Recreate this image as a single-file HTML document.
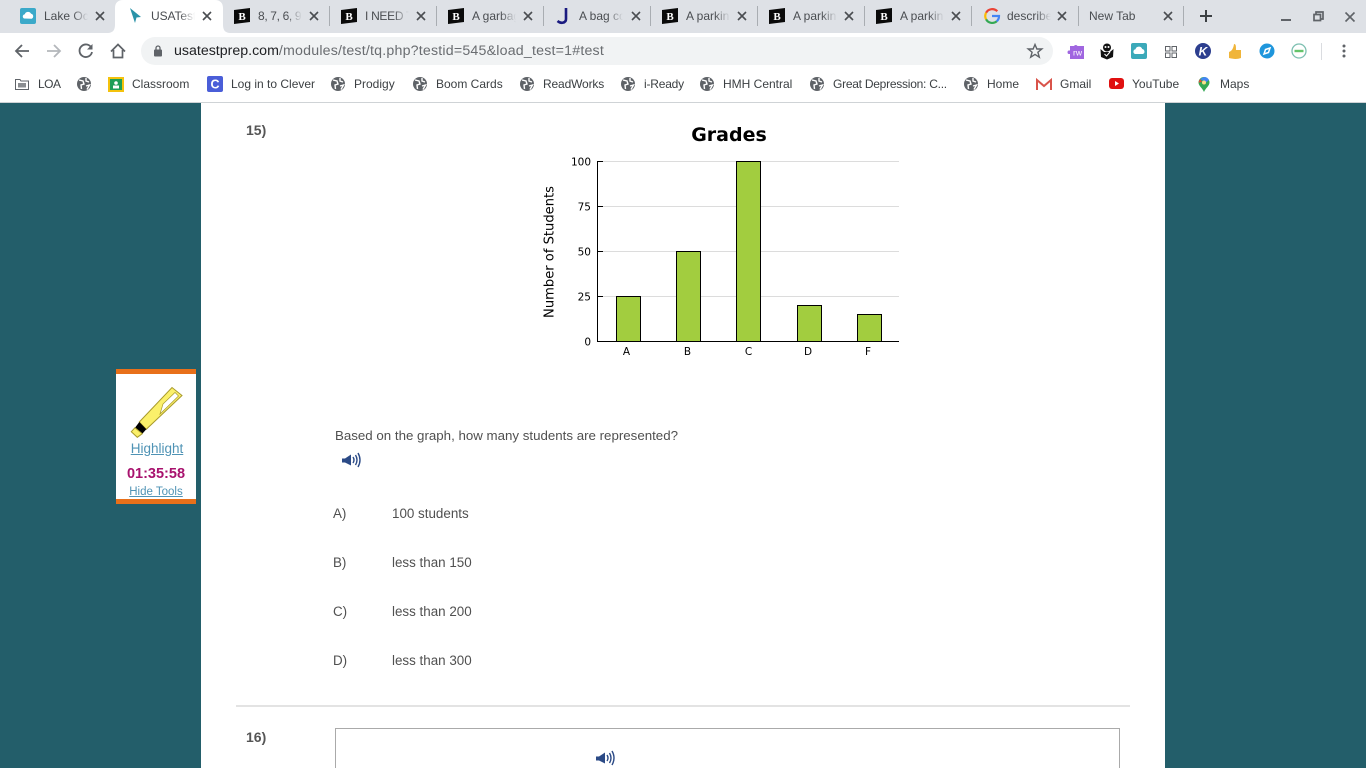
<!DOCTYPE html>
<html><head><meta charset="utf-8"><title>USATestprep</title>
<style>
html,body{margin:0;padding:0;width:1366px;height:768px;overflow:hidden;background:#235e6a;font-family:"Liberation Sans",sans-serif}
#root{position:absolute;left:0;top:0;width:1366px;height:768px;overflow:hidden;background:#235e6a}
.a{position:absolute;white-space:nowrap}
#strip{left:0;top:0;width:1366px;height:33px;background:#dee1e6}
#tool{left:0;top:33px;width:1366px;height:69px;background:#fff}
#line{left:0;top:102px;width:1366px;height:1px;background:#cfd3d6}
.t{top:9px;height:15px;line-height:15px;font-size:12px;color:#4a4d51;overflow:hidden;-webkit-mask-image:linear-gradient(90deg,#000 65%,transparent 100%);mask-image:linear-gradient(90deg,#000 65%,transparent 100%)}
.s{top:6px;width:1px;height:20px;background:#a9adb2}
.b{top:76px;line-height:16px;font-size:12px;color:#3c4043}
.c{color:#505050;font-size:13.4px;line-height:18px}
svg{position:absolute;overflow:visible}
</style></head><body><div id="root">
<div class="a" id="strip"></div>
<div class="a" id="tool"></div>
<div class="a" id="line"></div>

<!-- active tab -->
<svg style="left:107px;top:0" width="124" height="34"><path d="M0 33 C7 33 8 29 8 24 V8 C8 3 11 0 16 0 H108 C113 0 116 3 116 8 V24 C116 29 117 33 124 33 Z" fill="#fff"/></svg>

<!-- favicons -->
<svg style="left:20px;top:8px" width="16" height="16"><rect width="16" height="16" rx="2" fill="#3ba9c9"/><path d="M4 10.5a2.3 2.3 0 0 1 .8-4.3 3.4 3.4 0 0 1 6.3-.4 2.6 2.6 0 0 1 .6 4.9z" fill="#fff"/></svg>
<svg style="left:129px;top:8px" width="13" height="17"><path d="M1 0 L12 9 L7.5 9.5 L6 15 Z" fill="#2a93a8"/></svg>
<svg style="left:234px;top:8px" width="16" height="16"><path d="M0 2 L16 0 V14 L0 16 Z" fill="#0a0a0a"/><text x="8" y="12" text-anchor="middle" font-family="Liberation Serif" font-weight="bold" font-size="11" fill="#fff">B</text></svg>
<svg style="left:341px;top:8px" width="16" height="16"><path d="M0 2 L16 0 V14 L0 16 Z" fill="#0a0a0a"/><text x="8" y="12" text-anchor="middle" font-family="Liberation Serif" font-weight="bold" font-size="11" fill="#fff">B</text></svg>
<svg style="left:448px;top:8px" width="16" height="16"><path d="M0 2 L16 0 V14 L0 16 Z" fill="#0a0a0a"/><text x="8" y="12" text-anchor="middle" font-family="Liberation Serif" font-weight="bold" font-size="11" fill="#fff">B</text></svg>
<svg style="left:556px;top:7px" width="14" height="18"><path d="M10 1 V12 C10 16 5 17 1.5 14" fill="none" stroke="#1a1a80" stroke-width="2.6"/></svg>
<svg style="left:662px;top:8px" width="16" height="16"><path d="M0 2 L16 0 V14 L0 16 Z" fill="#0a0a0a"/><text x="8" y="12" text-anchor="middle" font-family="Liberation Serif" font-weight="bold" font-size="11" fill="#fff">B</text></svg>
<svg style="left:769px;top:8px" width="16" height="16"><path d="M0 2 L16 0 V14 L0 16 Z" fill="#0a0a0a"/><text x="8" y="12" text-anchor="middle" font-family="Liberation Serif" font-weight="bold" font-size="11" fill="#fff">B</text></svg>
<svg style="left:876px;top:8px" width="16" height="16"><path d="M0 2 L16 0 V14 L0 16 Z" fill="#0a0a0a"/><text x="8" y="12" text-anchor="middle" font-family="Liberation Serif" font-weight="bold" font-size="11" fill="#fff">B</text></svg>
<svg style="left:984px;top:8px" width="16" height="16" viewBox="0 0 16 16" fill="none" stroke-width="2.2"><path d="M13.3 3.3A7 7 0 0 0 2.1 4.7" stroke="#ea4335"/><path d="M2.1 4.7a7 7 0 0 0 0 6.6" stroke="#fbbc05"/><path d="M2.1 11.3a7 7 0 0 0 10.6 2" stroke="#34a853"/><path d="M12.7 13.3A7 7 0 0 0 15 8H8" stroke="#4285f4"/></svg>

<!-- titles -->
<div class="a t" style="left:44px;width:44px">Lake Ocean</div>
<div class="a t" style="left:151px;width:44px;letter-spacing:-.1px">USATestprep</div>
<div class="a t" style="left:258px;width:44px;letter-spacing:-.35px">8, 7, 6, 9, 5</div>
<div class="a t" style="left:365px;width:44px;letter-spacing:-.3px">I NEED THE</div>
<div class="a t" style="left:472px;width:44px">A garbage</div>
<div class="a t" style="left:579px;width:44px">A bag contains</div>
<div class="a t" style="left:686px;width:44px">A parking lot</div>
<div class="a t" style="left:793px;width:44px">A parking lot</div>
<div class="a t" style="left:900px;width:44px">A parking lot</div>
<div class="a t" style="left:1007px;width:44px">describe the</div>
<div class="a" style="left:1089px;top:9px;font-size:12px;line-height:15px;color:#4a4d51">New Tab</div>

<!-- close buttons -->
<svg style="left:95px;top:11px" width="10" height="10"><path d="M1 1L9 9M9 1L1 9" stroke="#4a4d51" stroke-width="1.6"/></svg>
<svg style="left:202px;top:11px" width="10" height="10"><path d="M1 1L9 9M9 1L1 9" stroke="#4a4d51" stroke-width="1.6"/></svg>
<svg style="left:309px;top:11px" width="10" height="10"><path d="M1 1L9 9M9 1L1 9" stroke="#4a4d51" stroke-width="1.6"/></svg>
<svg style="left:416px;top:11px" width="10" height="10"><path d="M1 1L9 9M9 1L1 9" stroke="#4a4d51" stroke-width="1.6"/></svg>
<svg style="left:523px;top:11px" width="10" height="10"><path d="M1 1L9 9M9 1L1 9" stroke="#4a4d51" stroke-width="1.6"/></svg>
<svg style="left:631px;top:11px" width="10" height="10"><path d="M1 1L9 9M9 1L1 9" stroke="#4a4d51" stroke-width="1.6"/></svg>
<svg style="left:737px;top:11px" width="10" height="10"><path d="M1 1L9 9M9 1L1 9" stroke="#4a4d51" stroke-width="1.6"/></svg>
<svg style="left:844px;top:11px" width="10" height="10"><path d="M1 1L9 9M9 1L1 9" stroke="#4a4d51" stroke-width="1.6"/></svg>
<svg style="left:951px;top:11px" width="10" height="10"><path d="M1 1L9 9M9 1L1 9" stroke="#4a4d51" stroke-width="1.6"/></svg>
<svg style="left:1057px;top:11px" width="10" height="10"><path d="M1 1L9 9M9 1L1 9" stroke="#4a4d51" stroke-width="1.6"/></svg>
<svg style="left:1163px;top:11px" width="10" height="10"><path d="M1 1L9 9M9 1L1 9" stroke="#4a4d51" stroke-width="1.6"/></svg>

<!-- separators -->
<div class="a s" style="left:329px"></div>
<div class="a s" style="left:436px"></div>
<div class="a s" style="left:543px"></div>
<div class="a s" style="left:650px"></div>
<div class="a s" style="left:757px"></div>
<div class="a s" style="left:864px"></div>
<div class="a s" style="left:971px"></div>
<div class="a s" style="left:1078px"></div>
<div class="a s" style="left:1183px"></div>

<!-- new tab + window controls -->
<svg style="left:1199px;top:9px" width="14" height="14"><path d="M7 1V13M1 7H13" stroke="#3c4043" stroke-width="2"/></svg>
<svg style="left:1281px;top:19px" width="11" height="3"><rect width="10" height="2" fill="#5f6368"/></svg>
<svg style="left:1313px;top:11px" width="11" height="11"><path d="M3 3V1H10V8H8M1 3.5H7.5V9.5H1Z" fill="none" stroke="#5f6368" stroke-width="1.7"/></svg>
<svg style="left:1345px;top:12px" width="10" height="10"><path d="M.5 .5L9.5 9.5M9.5 .5L.5 9.5" stroke="#5f6368" stroke-width="1.6"/></svg>

<!-- nav -->
<svg style="left:14px;top:43px" width="16" height="16"><path d="M15 8H2M8 2L2 8L8 14" fill="none" stroke="#5f6368" stroke-width="1.8"/></svg>
<svg style="left:46px;top:43px" width="16" height="16"><path d="M1 8H14M8 2L14 8L8 14" fill="none" stroke="#b4b7bb" stroke-width="1.8"/></svg>
<svg style="left:78px;top:43px" width="16" height="16"><path d="M13.5 5A6.3 6.3 0 1 0 14 9" fill="none" stroke="#5f6368" stroke-width="1.8"/><path d="M14.5 1V6.5H9Z" fill="#5f6368"/></svg>
<svg style="left:110px;top:43px" width="16" height="16"><path d="M1 8.5L8 1.5L15 8.5M3.5 7V14.5H12.5V7" fill="none" stroke="#5f6368" stroke-width="1.7"/></svg>

<!-- omnibox -->
<div class="a" style="left:141px;top:37px;width:912px;height:28px;border-radius:14px;background:#f1f3f4"></div>
<svg style="left:153px;top:45px" width="10" height="12"><rect x="1" y="4.5" width="8" height="7" rx="1" fill="#5f6368"/><path d="M3 5V3a2 2 0 0 1 4 0V5" fill="none" stroke="#5f6368" stroke-width="1.3"/></svg>
<div class="a" style="left:174px;top:42px;font-size:14.2px;line-height:18px;color:#6a6d71"><span style="color:#202124">usatestprep.com</span><span style="letter-spacing:.2px">/modules/test/tq.php?testid=545&amp;load_test=1#test</span></div>
<svg style="left:1027px;top:43px" width="16" height="16"><path d="M8 1.5L9.9 6H14.8L10.9 9.2L12.3 14.2L8 11.4L3.7 14.2L5.1 9.2L1.2 6H6.1Z" fill="none" stroke="#5f6368" stroke-width="1.4"/></svg>

<!-- extensions -->
<svg style="left:1067px;top:43px" width="18" height="17"><path d="M3 3H7A2 2 0 0 1 10.5 3H17V16H3V11H1.5A2 2 0 0 1 1.5 7.5H3Z" fill="#a066e0"/><text x="10.5" y="12.5" text-anchor="middle" font-size="8.5" fill="#fff">rw</text></svg>
<svg style="left:1099px;top:43px" width="16" height="17"><circle cx="8" cy="4.5" r="4" fill="#111"/><path d="M1.5 6L5 9H11L14.5 6L14 14L8 16.5L2 14Z" fill="#111"/><path d="M5.5 11L7.5 13L11 9" stroke="#fff" fill="none"/><circle cx="6.5" cy="4" r="1" fill="#fff"/><circle cx="9.5" cy="4" r="1" fill="#fff"/></svg>
<svg style="left:1131px;top:43px" width="16" height="16"><rect width="16" height="16" rx="2" fill="#3ba9b9"/><path d="M4 11a2.5 2.5 0 0 1 .5-4.8 3.5 3.5 0 0 1 6.7-.2 2.6 2.6 0 0 1 .6 5z" fill="#fff"/></svg>
<svg style="left:1165px;top:46px" width="12" height="12"><path d="M.5 .5H5V5H.5ZM7 .5H11.5V5H7ZM.5 7H5V11.5H.5ZM7 7H11.5V11.5H7Z" fill="none" stroke="#5f6368"/></svg>
<svg style="left:1195px;top:43px" width="16" height="16"><circle cx="8" cy="8" r="8" fill="#2d3f8f"/><text x="8" y="12.5" text-anchor="middle" font-size="12" font-weight="bold" font-style="italic" fill="#fff">K</text></svg>
<svg style="left:1227px;top:43px" width="16" height="17"><path d="M7 1C9 1 9 3 9 7H14V15C10 16.5 6 16 2 15V9C5 8 6.5 5 7 1Z" fill="#f0b53a"/></svg>
<svg style="left:1259px;top:43px" width="16" height="16"><circle cx="8" cy="8" r="7.5" fill="#1f96dc"/><path d="M5 11L6.5 6.5L11 5L9.5 9.5Z" fill="none" stroke="#fff" stroke-width="1.5"/></svg>
<svg style="left:1291px;top:43px" width="16" height="16"><circle cx="8" cy="8" r="7" fill="#fff" stroke="#7cbfb0" stroke-width="1.3"/><rect x="3.5" y="6.8" width="9" height="2.4" fill="#64c46a"/></svg>
<div class="a" style="left:1321px;top:43px;width:1px;height:17px;background:#dadce0"></div>
<svg style="left:1342px;top:44px" width="4" height="14"><circle cx="2" cy="2" r="1.5" fill="#5f6368"/><circle cx="2" cy="7" r="1.5" fill="#5f6368"/><circle cx="2" cy="12" r="1.5" fill="#5f6368"/></svg>

<!-- bookmarks -->
<svg style="left:15px;top:78px" width="14" height="12"><path d="M.5 1.5H5L6 3H13.5V11.5H.5Z" fill="none" stroke="#5f6368"/><rect x="3" y="5" width="8" height="4.5" fill="#8a8d91"/></svg>
<div class="a b" style="left:38px;letter-spacing:-.5px">LOA</div>
<svg style="left:77px;top:77px" width="14" height="14"><circle cx="7" cy="7" r="7" fill="#5f6368"/><path d="M2 3L6 4L7 7L4 8L4.5 12M9 1L9 4L12 5M9 9L12.5 8L10 12.5" fill="none" stroke="#fff" stroke-width="1.4"/></svg>
<svg style="left:108px;top:77px" width="16" height="15"><rect width="16" height="15" fill="#f4c20d"/><rect x="2" y="2" width="12" height="11" fill="#1e9e57"/><circle cx="8" cy="6" r="1.8" fill="#fff"/><rect x="5" y="8.5" width="6" height="3" fill="#fff"/></svg>
<div class="a b" style="left:132px">Classroom</div>
<svg style="left:207px;top:76px" width="16" height="16"><rect width="16" height="16" rx="2" fill="#4a5ed8"/><text x="8" y="12.5" text-anchor="middle" font-size="12.5" font-weight="bold" fill="#fff">C</text></svg>
<div class="a b" style="left:231px">Log in to Clever</div>
<svg style="left:331px;top:77px" width="14" height="14"><circle cx="7" cy="7" r="7" fill="#5f6368"/><path d="M2 3L6 4L7 7L4 8L4.5 12M9 1L9 4L12 5M9 9L12.5 8L10 12.5" fill="none" stroke="#fff" stroke-width="1.4"/></svg>
<div class="a b" style="left:354px">Prodigy</div>
<svg style="left:413px;top:77px" width="14" height="14"><circle cx="7" cy="7" r="7" fill="#5f6368"/><path d="M2 3L6 4L7 7L4 8L4.5 12M9 1L9 4L12 5M9 9L12.5 8L10 12.5" fill="none" stroke="#fff" stroke-width="1.4"/></svg>
<div class="a b" style="left:436px">Boom Cards</div>
<svg style="left:520px;top:77px" width="14" height="14"><circle cx="7" cy="7" r="7" fill="#5f6368"/><path d="M2 3L6 4L7 7L4 8L4.5 12M9 1L9 4L12 5M9 9L12.5 8L10 12.5" fill="none" stroke="#fff" stroke-width="1.4"/></svg>
<div class="a b" style="left:543px;letter-spacing:-.15px">ReadWorks</div>
<svg style="left:621px;top:77px" width="14" height="14"><circle cx="7" cy="7" r="7" fill="#5f6368"/><path d="M2 3L6 4L7 7L4 8L4.5 12M9 1L9 4L12 5M9 9L12.5 8L10 12.5" fill="none" stroke="#fff" stroke-width="1.4"/></svg>
<div class="a b" style="left:644px;letter-spacing:-.2px">i-Ready</div>
<svg style="left:700px;top:77px" width="14" height="14"><circle cx="7" cy="7" r="7" fill="#5f6368"/><path d="M2 3L6 4L7 7L4 8L4.5 12M9 1L9 4L12 5M9 9L12.5 8L10 12.5" fill="none" stroke="#fff" stroke-width="1.4"/></svg>
<div class="a b" style="left:723px">HMH Central</div>
<svg style="left:810px;top:77px" width="14" height="14"><circle cx="7" cy="7" r="7" fill="#5f6368"/><path d="M2 3L6 4L7 7L4 8L4.5 12M9 1L9 4L12 5M9 9L12.5 8L10 12.5" fill="none" stroke="#fff" stroke-width="1.4"/></svg>
<div class="a b" style="left:833px;letter-spacing:-.25px">Great Depression: C...</div>
<svg style="left:964px;top:77px" width="14" height="14"><circle cx="7" cy="7" r="7" fill="#5f6368"/><path d="M2 3L6 4L7 7L4 8L4.5 12M9 1L9 4L12 5M9 9L12.5 8L10 12.5" fill="none" stroke="#fff" stroke-width="1.4"/></svg>
<div class="a b" style="left:987px">Home</div>
<svg style="left:1036px;top:78px" width="16" height="13"><path d="M1 12V2L8 8L15 2V12" fill="none" stroke="#d9534a" stroke-width="2"/></svg>
<div class="a b" style="left:1060px">Gmail</div>
<svg style="left:1109px;top:78px" width="15" height="12"><rect width="15" height="11" rx="3" fill="#e01010"/><path d="M6 3L10 5.5L6 8Z" fill="#fff"/></svg>
<div class="a b" style="left:1132px">YouTube</div>
<svg style="left:1197px;top:76px" width="14" height="17"><path d="M7 1A5.5 5.5 0 0 1 12.5 6.5C12.5 10 8.5 12 7 16C5.5 12 1.5 10 1.5 6.5A5.5 5.5 0 0 1 7 1Z" fill="#34a853"/><path d="M3 3L7 1A5.5 5.5 0 0 1 12 4L9 6.5Z" fill="#4285f4"/><path d="M1.5 6.5L3 3L5 6Z" fill="#ea4335"/><circle cx="7" cy="6.5" r="2" fill="#fbe089"/></svg>
<div class="a b" style="left:1220px">Maps</div>

<!-- page -->
<div class="a" style="left:201px;top:103px;width:964px;height:665px;background:#fff"></div>
<div class="a" style="left:246px;top:122px;font-size:14px;line-height:16px;font-weight:bold;color:#555">15)</div>

<!-- chart -->
<svg style="left:0;top:0" width="1366" height="768">
<g stroke="#dcdcdc" stroke-width="1"><path d="M598 161.5H899M598 206.5H899M598 251.5H899M598 296.5H899"/></g>
<g stroke="#000" stroke-width="1" fill="#a2cd3f">
<rect x="616.5" y="296.5" width="24" height="45"/>
<rect x="676.5" y="251.5" width="24" height="90"/>
<rect x="736.5" y="161.5" width="24" height="180"/>
<rect x="797.5" y="305.5" width="24" height="36"/>
<rect x="857.5" y="314.5" width="24" height="27"/>
</g>
<path d="M597.5 161V342M597 341.5H899M597 161.5H603M597 206.5H603M597 251.5H603M597 296.5H603" stroke="#000" fill="none"/>
<g font-family="DejaVu Sans" font-size="10.5" fill="#000">
<g text-anchor="end"><text x="591" y="165.5">100</text><text x="591" y="210.5">75</text><text x="591" y="255.5">50</text><text x="591" y="300.5">25</text><text x="591" y="345.5">0</text></g>
<g text-anchor="middle"><text x="626.5" y="355">A</text><text x="687.5" y="355">B</text><text x="748.5" y="355">C</text><text x="808" y="355">D</text><text x="868" y="355">F</text></g>
</g>
<text x="729" y="141" text-anchor="middle" font-family="DejaVu Sans" font-weight="bold" font-size="19" fill="#000">Grades</text>
<text transform="translate(553.5 252) rotate(-90)" text-anchor="middle" font-family="DejaVu Sans" font-size="13.1" fill="#000">Number of Students</text>
</svg>

<div class="a c" style="left:335px;top:427px;font-size:13.3px">Based on the graph, how many students are represented?</div>
<svg style="left:342px;top:451px" width="20" height="18"><path d="M0 7H3L9 3V14L3 11H0Z" fill="#2b4a86" transform="translate(0 .5)"/><path d="M11 6Q13 9 11 12M13.5 4Q16.5 9 13.5 14M16 2Q20 9 16 16" fill="none" stroke="#2b4a86" stroke-width="1.4"/></svg>

<div class="a c" style="left:333px;top:505px">A)</div><div class="a c" style="left:392px;top:505px">100 students</div>
<div class="a c" style="left:333px;top:554px">B)</div><div class="a c" style="left:392px;top:554px">less than 150</div>
<div class="a c" style="left:333px;top:603px">C)</div><div class="a c" style="left:392px;top:603px">less than 200</div>
<div class="a c" style="left:333px;top:652px">D)</div><div class="a c" style="left:392px;top:652px">less than 300</div>

<div class="a" style="left:236px;top:705px;width:894px;height:2px;background:#e3e3e3"></div>
<div class="a" style="left:246px;top:729px;font-size:14px;line-height:16px;font-weight:bold;color:#555">16)</div>
<div class="a" style="left:335px;top:728px;width:783px;height:39px;border:1px solid #aaa;border-bottom:0"></div>
<svg style="left:596px;top:749px" width="20" height="18"><path d="M0 7H3L9 3V14L3 11H0Z" fill="#2b4a86" transform="translate(0 .5)"/><path d="M11 6Q13 9 11 12M13.5 4Q16.5 9 13.5 14M16 2Q20 9 16 16" fill="none" stroke="#2b4a86" stroke-width="1.4"/></svg>

<!-- tools panel -->
<div class="a" style="left:116px;top:369px;width:80px;height:125px;background:#fff;border-top:5px solid #e8701a;border-bottom:5px solid #e8701a"></div>
<svg style="left:0;top:0" width="300" height="600">
<path d="M139.3 422L172 387.5L182 395.5L146.3 429.3Z" fill="#fbf06a" stroke="#a89a2c"/>
<path d="M163 404L175 392.5L178.5 396L160 414Z" fill="#fff" stroke="#a89a2c" stroke-width=".7"/>
<path d="M139.3 422L146.3 429.3L142.3 433.7L135 427.7Z" fill="#000"/>
<path d="M135 427.7L142.3 433.7L137.3 437.3L131.3 431.7Z" fill="#fbf06a" stroke="#a89a2c"/>
</svg>
<div class="a" style="left:117px;width:80px;top:440px;text-align:center;font-size:13.5px;line-height:17px;color:#4f93b5;text-decoration:underline">Highlight</div>
<div class="a" style="left:116px;width:80px;top:466px;text-align:center;font-size:14.5px;line-height:16px;font-weight:bold;color:#a8126e">01:35:58</div>
<div class="a" style="left:116px;width:80px;top:485px;text-align:center;font-size:11.5px;line-height:14px;color:#4f93b5;text-decoration:underline">Hide Tools</div>
</div></body></html>
